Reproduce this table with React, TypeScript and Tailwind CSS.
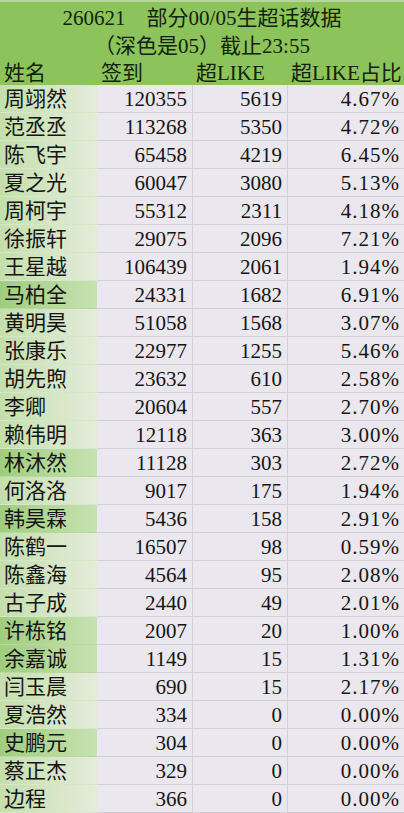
const rows: [string, number, number, string, boolean][] = [
  ["周翊然", 120355, 5619, "4.67%", false],
  ["范丞丞", 113268, 5350, "4.72%", false],
  ["陈飞宇", 65458, 4219, "6.45%", false],
  ["夏之光", 60047, 3080, "5.13%", false],
  ["周柯宇", 55312, 2311, "4.18%", false],
  ["徐振轩", 29075, 2096, "7.21%", false],
  ["王星越", 106439, 2061, "1.94%", false],
  ["马柏全", 24331, 1682, "6.91%", true],
  ["黄明昊", 51058, 1568, "3.07%", false],
  ["张康乐", 22977, 1255, "5.46%", false],
  ["胡先煦", 23632, 610, "2.58%", false],
  ["李卿", 20604, 557, "2.70%", false],
  ["赖伟明", 12118, 363, "3.00%", false],
  ["林沐然", 11128, 303, "2.72%", true],
  ["何洛洛", 9017, 175, "1.94%", false],
  ["韩昊霖", 5436, 158, "2.91%", true],
  ["陈鹤一", 16507, 98, "0.59%", false],
  ["陈鑫海", 4564, 95, "2.08%", false],
  ["古子成", 2440, 49, "2.01%", false],
  ["许栋铭", 2007, 20, "1.00%", true],
  ["余嘉诚", 1149, 15, "1.31%", true],
  ["闫玉晨", 690, 15, "2.17%", false],
  ["夏浩然", 334, 0, "0.00%", false],
  ["史鹏元", 304, 0, "0.00%", true],
  ["蔡正杰", 329, 0, "0.00%", false],
  ["边程", 366, 0, "0.00%", false],
];

export default function App() {
  return (
    <div className="w-[404px] h-[813px] overflow-hidden bg-[#ebe7ee] text-[21px] leading-[28px] text-[#151515] font-['Liberation_Serif','Noto_Sans_CJK_SC',serif]">
      <div className="bg-[#8cc45b] border-t-2 border-[#b7d69c] text-[#13220b]">
        <div className="h-[30px] pt-[2px] flex justify-center whitespace-pre">
          {"260621    部分00/05生超话数据"}
        </div>
        <div className="h-[27px] flex justify-center">（深色是05）截止23:55</div>
        <div className="h-[26px] grid grid-cols-[97px_96px_95px_116px] whitespace-nowrap">
          <div className="pl-[4px]">姓名</div>
          <div className="pl-[4px]">签到</div>
          <div className="pl-[3px]">超LIKE</div>
          <div className="pl-[3px]">超LIKE占比</div>
        </div>
      </div>

      <div className="grid grid-cols-[97px_96px_95px_116px]">
        {rows.map(([name, sign, like, pct, dark]) => (
          <div key={name} className="contents">
            <div
              className={
                dark
                  ? "h-[28px] pl-[4px] border-b border-[#b9d8a0] bg-gradient-to-r from-[#9fcd7d] to-[#c7e2b1]"
                  : "h-[28px] pl-[4px] border-b border-[#d6e6c8] bg-gradient-to-r from-[#c4dfab] to-[#e3ecda]"
              }
            >
              {name}
            </div>
            <div className="h-[28px] pr-[5px] text-right border-b border-r border-[#d3cfd6]">
              {sign}
            </div>
            <div className="h-[28px] pr-[5px] text-right border-b border-r border-[#d3cfd6]">
              {like}
            </div>
            <div className="h-[28px] pr-[4px] text-right border-b border-[#d3cfd6] tracking-[1px]">
              {pct}
            </div>
          </div>
        ))}
      </div>
    </div>
  );
}
